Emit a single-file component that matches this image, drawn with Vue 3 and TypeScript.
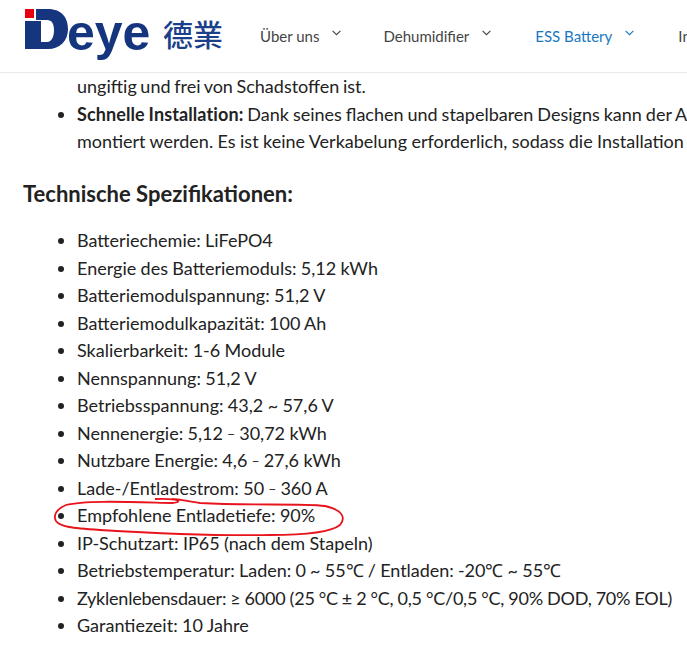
<script setup lang="ts">
const specs: string[] = [
  'Batteriechemie: LiFePO4',
  'Energie des Batteriemoduls: 5,12 kWh',
  'Batteriemodulspannung: 51,2 V',
  'Batteriemodulkapazität: 100 Ah',
  'Skalierbarkeit: 1-6 Module',
  'Nennspannung: 51,2 V',
  'Betriebsspannung: 43,2 ~ 57,6 V',
  'Nennenergie: 5,12 – 30,72 kWh',
  'Nutzbare Energie: 4,6 – 27,6 kWh',
  'Lade-/Entladestrom: 50 – 360 A',
  'Empfohlene Entladetiefe: 90%',
  'IP-Schutzart: IP65 (nach dem Stapeln)',
  'Betriebstemperatur: Laden: 0 ~ 55℃ / Entladen: -20℃ ~ 55℃',
  'Zyklenlebensdauer: ≥ 6000 (25 °C ± 2 °C, 0,5 °C/0,5 °C, 90% DOD, 70% EOL)',
  'Garantiezeit: 10 Jahre',
]
const nav = [
  { label: 'Über uns', active: false },
  { label: 'Dehumidifier', active: false },
  { label: 'ESS Battery', active: true },
]
</script>

<template>
  <div class="page">
    <header class="header">
      <div class="logo">
        <svg class="logo-svg" width="200" height="60" viewBox="24 6 200 60">
          <rect x="25" y="9" width="9" height="9" fill="#e60012" />
          <path d="M36 9H48C62 9 68 18 68 29C68 41 60 49 48 49H25V21H41V42H47C52 42 54 36 54 30C54 24 52 20 47 20H36Z" fill="#15357f" />
          <text x="67" y="49.500" class="logo-latin">eye</text>
          <text x="163" y="46" class="logo-cjk">德業</text>
        </svg>
      </div>
      <nav class="nav">
        <a v-for="item in nav" :key="item.label" class="nav-item" :class="{ active: item.active }">
          <span>{{ item.label }}</span>
          <svg class="chev" width="9" height="6" viewBox="0 0 9 6">
            <path d="M.6.800 4.500 4.700 8.400.800" fill="none" stroke="currentColor" stroke-width="1.100" />
          </svg>
        </a>
        <a class="nav-item">Industrial</a>
      </nav>
    </header>

    <main class="content">
      <ul class="list top">
        <li class="no-bullet">ungiftig und frei von Schadstoffen ist.</li>
        <li><strong>Schnelle Installation:</strong> Dank seines flachen und stapelbaren Designs kann der Akku einfach<br /><span class="second">montiert werden. Es ist keine Verkabelung erforderlich, sodass die Installation schnell geht.</span></li>
      </ul>
      <h2 class="title">Technische Spezifikationen:</h2>
      <ul class="list specs">
        <li v-for="s in specs" :key="s" :class="{ tight: s.includes('°C'), snug: s.includes('℃') }">
          <template v-for="(part, i) in s.split(' – ')" :key="i"><span v-if="i" class="dash"> – </span>{{ part }}</template>
        </li>
      </ul>
    </main>

    <svg class="mark" width="687" height="651" viewBox="0 0 687 651">
      <path d="M155 499C185 498 180 503 172 503C130 502 85 500 66 505C56 509 53 516 56 521C60 527 72 528 100 530C150 533 220 536 270 535C300 535 330 533 340 525C346 518 343 510 325 506C300 503 250 506 200 503C190 502 180 499 172 499" fill="none" stroke="#e8141c" stroke-width="1.800" />
    </svg>
  </div>
</template>

<style>
html, body { margin: 0; background: #fff; }
</style>

<style scoped>
.page {
  position: relative;
  width: 687px;
  height: 651px;
  overflow: hidden;
  background: #fff;
  font-family: Lato, "Liberation Sans", sans-serif;
  color: #222;
}
.header {
  display: flex;
  align-items: center;
  height: 72px;
  padding-left: 24px;
  border-bottom: 1px solid #eaeaea;
  white-space: nowrap;
}
.logo { width: 236px; flex: none; height: 60px; }
.logo-svg { display: block; }
.logo-latin {
  font-family: "Liberation Sans", sans-serif;
  font-weight: 700;
  font-size: 50px;
  fill: #15357f;
}
.logo-cjk {
  font-family: "Noto Sans CJK TC", sans-serif;
  font-size: 30px;
  font-weight: 500;
  fill: #1b3f8b;
}
.nav { display: flex; align-items: center; }
.nav-item {
  display: flex;
  align-items: flex-start;
  gap: 13px;
  margin-right: 44px;
  font-size: 15px;
  line-height: 22px;
  color: #444;
}
.nav-item:first-child { margin-right: 42px; }
.nav-item.active { color: #1a78c2; }
.chev { margin-top: 5px; }
.content {
  padding: 0 0 0 23px;
  width: 900px;
  font-size: 18px;
  line-height: 27.500px;
}
.list { margin: 0; padding: 0 0 0 54px; }
.list li { margin: 0; white-space: nowrap; }
.list.top li { word-spacing: -0.650px; }
.list.top strong { letter-spacing: 0.100px; }
.list.top .second { word-spacing: -0.200px; }
.list.top .no-bullet { word-spacing: -1px; }
.list.specs { word-spacing: -0.250px; }
.list .tight { letter-spacing: -0.230px; }
.list .snug { letter-spacing: -0.050px; }
.dash { font-size: 14px; line-height: 0; vertical-align: 1px; word-spacing: 0.500px; white-space: pre; }
.no-bullet { list-style: none; }
.title {
  margin: 21.500px 0 17px;
  font-size: 22px;
  line-height: 33px;
  font-weight: 700;
  color: #222;
}
.mark { position: absolute; left: 0; top: 0; pointer-events: none; }
</style>
